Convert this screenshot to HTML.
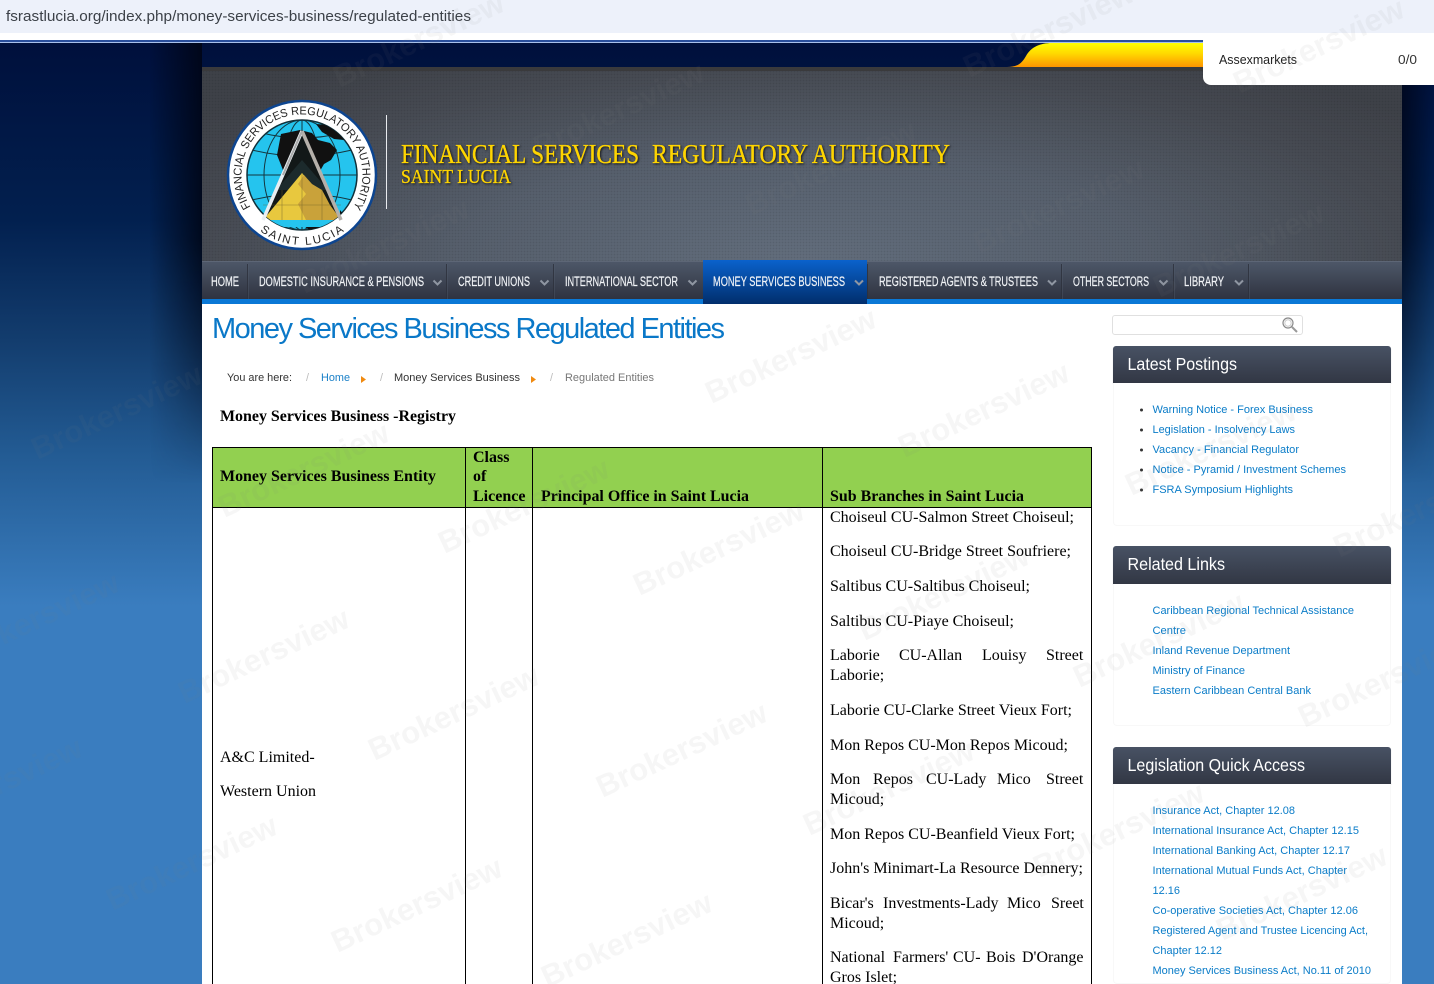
<!DOCTYPE html>
<html lang="en"><head><meta charset="utf-8"><title>Money Services Business Regulated Entities</title>
<style>
html,body{margin:0;padding:0;width:1434px;height:984px;overflow:hidden;background:#3a7dbf}
.a{position:absolute}
#bg{left:0;top:43px;width:1434px;height:941px;background:linear-gradient(180deg,#00103c 0,#02204f 177px,#133d6e 298px,#225a92 407px,#3a7dbf 563px,#3a7dbf 100%)}
#shL{left:150px;top:43px;width:52px;height:440px;background:linear-gradient(90deg,rgba(0,5,20,0),rgba(0,5,20,.85));-webkit-mask-image:linear-gradient(180deg,#000 45%,transparent 100%);mask-image:linear-gradient(180deg,#000 45%,transparent 100%)}
#shR{left:1402px;top:43px;width:32px;height:440px;background:linear-gradient(270deg,rgba(0,5,20,0),rgba(0,5,20,.7));-webkit-mask-image:linear-gradient(180deg,#000 45%,transparent 100%);mask-image:linear-gradient(180deg,#000 45%,transparent 100%)}
#top{left:0;top:0;width:1434px;height:33px;background:#edf1fa}
#wht{left:0;top:33px;width:1434px;height:7px;background:#fff}
#ln1{left:0;top:40px;width:1434px;height:2px;background:#2a4f9c}
#ln2{left:0;top:42px;width:1434px;height:1px;background:#a9c1ea}
#hdr{left:202px;top:67px;width:1200px;height:194px;background:radial-gradient(ellipse 760px 240px at 600px 194px,#626d7c 0,#565f6c 45%,#464a52 80%,#3e4148 100%)}
#dots{left:202px;top:67px;width:1200px;height:194px;background-image:radial-gradient(rgba(0,0,0,.09) .7px,transparent .9px);background-size:3px 3px}
#strip{left:202px;top:67px;width:1200px;height:4px;background:#3a3a3c}
#nav{left:202px;top:261px;width:1200px;height:38px;background:linear-gradient(180deg,#4d5768,#2f3340);border-top:1px solid #5d6676;box-sizing:border-box}
#navb{left:202px;top:299px;width:1200px;height:5px;background:#0a78d6}
#act{left:703px;top:260px;width:164px;height:44px;background:linear-gradient(180deg,#0a62cc,#012e6c)}
#main{left:202px;top:304px;width:1200px;height:680px;background:#fff}
#popup{left:1203px;top:33px;width:231px;height:52px;background:#fff;border-radius:8px 0 0 8px}
#srch{left:1112px;top:315px;width:191px;height:20px;box-sizing:border-box;border:1px solid #e0e0e0;border-radius:3px;background:#fff}
.ph{left:1113px;width:278px;background:linear-gradient(180deg,#485264,#323744);border-radius:3px 3px 0 0;box-shadow:0 1px 1px #ccc}
.pb{left:1113px;width:278px;box-sizing:border-box;border:1px solid #f8f8f8;border-top:0;border-radius:0 0 4px 4px;background:#fff}
#th{left:212px;top:447px;width:880px;height:61px;background:#92d050}
.bk{background:#000}
#main2{position:absolute;left:0;top:0}
svg text{white-space:pre}
.nv{font:13.5px "Liberation Sans Narrow","Liberation Sans",sans-serif;fill:#f2f4f7;stroke:#f2f4f7;stroke-width:.2px}
.s{font:11px "Liberation Sans",sans-serif;fill:#0a7cc8}
.t{font:16px "Liberation Serif",serif;fill:#000}
.b{font:bold 16px "Liberation Serif",serif;fill:#000}
.pt{font:18px "Liberation Sans",sans-serif;fill:#fff}
.bc{font:10.7px "Liberation Sans",sans-serif;fill:#333}
.ttl{font:27px "Liberation Serif",serif;fill:#ffd500;stroke:#ffd500;stroke-width:.35px;filter:drop-shadow(1.5px 1.5px 1px rgba(0,0,0,.75))}
.wm{font:bold 31px "Liberation Sans",sans-serif;fill:#808080;fill-opacity:.07}
</style></head><body>
<div class="a" id="bg"></div><div class="a" id="shL"></div><div class="a" id="shR"></div>
<div class="a" id="top"></div><div class="a" id="wht"></div><div class="a" id="ln1"></div><div class="a" id="ln2"></div>
<svg class="a" style="left:1000px;top:43px" width="210" height="26" viewBox="0 0 210 26"><defs><linearGradient id="yg" x1="0" y1="0" x2="0" y2="1"><stop offset="0" stop-color="#ffff00"/><stop offset=".45" stop-color="#ffd800"/><stop offset="1" stop-color="#ff9500"/></linearGradient></defs><path d="M7 24C18 24 22 20 26 13C31 4 40 0 52 0H210V24Z" fill="url(#yg)"/></svg>
<div class="a" id="hdr"></div><div class="a" id="dots"></div><div class="a" id="strip"></div>
<div class="a" id="nav"></div><div class="a" id="navb"></div><div class="a" id="act"></div>
<div class="a" id="main"></div>
<div class="a" id="popup"></div>
<div class="a" id="srch"></div>
<div class="a ph" style="top:346px;height:37px"></div><div class="a pb" style="top:383px;height:143px"></div>
<div class="a ph" style="top:546px;height:38px"></div><div class="a pb" style="top:584px;height:142px"></div>
<div class="a ph" style="top:747px;height:37px"></div><div class="a pb" style="top:784px;height:200px"></div>
<div class="a" id="th"></div>
<div class="a bk" style="left:212px;top:447px;width:880px;height:1px"></div>
<div class="a bk" style="left:212px;top:507px;width:880px;height:1px"></div>
<div class="a bk" style="left:212px;top:447px;width:1px;height:537px"></div>
<div class="a bk" style="left:465px;top:447px;width:1px;height:537px"></div>
<div class="a bk" style="left:532px;top:447px;width:1px;height:537px"></div>
<div class="a bk" style="left:822px;top:447px;width:1px;height:537px"></div>
<div class="a bk" style="left:1091px;top:447px;width:1px;height:537px"></div>
<div class="a" style="left:386px;top:115px;width:1px;height:94px;background:#e8eaee"></div>

<svg id="main2" width="1434" height="984" viewBox="0 0 1434 984">
<defs>
<clipPath id="gc"><circle cx="302" cy="175" r="55"/></clipPath>
<path id="arcT" d="M250.700 207A60.500 60.500 0 1 1 353.300 207"/>
<path id="arcB" d="M260 231A70 70 0 0 0 344 231"/>
</defs>
<!-- browser bar -->
<text x="6" y="21" textLength="465" lengthAdjust="spacingAndGlyphs" style="font:14.5px 'Liberation Sans',sans-serif;fill:#3c4148">fsrastlucia.org/index.php/money-services-business/regulated-entities</text>
<text x="1219" y="64" textLength="78" lengthAdjust="spacingAndGlyphs" style="font:12.500px 'Liberation Sans',sans-serif;fill:#222">Assexmarkets</text>
<text x="1398" y="64" textLength="19" lengthAdjust="spacingAndGlyphs" style="font:12.500px 'Liberation Sans',sans-serif;fill:#333">0/0</text>

<!-- logo -->
<circle cx="302" cy="175" r="74" fill="#fff" stroke="#0d4590" stroke-width="2.500"/>
<circle cx="302" cy="175" r="55" fill="#25c4ee" stroke="#10303a" stroke-width="1.500"/>
<g clip-path="url(#gc)">
<g fill="none" stroke="#14363f" stroke-width="1">
<ellipse cx="302" cy="175" rx="18" ry="55"/><ellipse cx="302" cy="175" rx="38" ry="55"/><path d="M302 120V230"/>
<path d="M247 175H357M252 150Q302 162 352 150M262 133Q302 143 342 133M252 200Q302 188 352 200M262 217Q302 207 342 217"/>
</g>
<path d="M281 134L300 130L312 133L318 140L330 143L337 150L331 160L324 164L316 178H286L281 165L277 155Z" fill="#111"/>
<path d="M316 124L328 125L340 132L344 140L334 139L322 132Z" fill="#111"/>
<path d="M304 226H336L326 232L312 232Z" fill="#111"/>
<path d="M340 210L346 218L340 222Z" fill="#111"/>
<path d="M302 131L341 220H263Z" fill="#121818"/>
<path d="M302 160L328 190H276Z" fill="#1c2a2c"/>
<path d="M302 173L341 220H263Z" fill="#e8c83e"/>
<path d="M304 175L312 184L322 190L330 205L341 220H306L298 204L306 194L298 184Z" fill="#c9a23a"/>
<path d="M258 220H346L340 227H264Z" fill="#25c4ee"/>
<g fill="none" stroke="#6d5f2a" stroke-width=".6" opacity=".7"><path d="M302 174V220M263 205H341M282 190V220M322 190V220"/></g>
</g>
<path d="M302 131L263 220" stroke="#e8eef2" stroke-width="3.500" fill="none"/>
<path d="M302 131L341 220" stroke="#b5b0aa" stroke-width="3.500" fill="none"/>
<path d="M302 131L283 175" stroke="#aaa" stroke-width="2" fill="none"/>
<text style="font:11.500px 'Liberation Sans',sans-serif;fill:#222"><textPath href="#arcT" textLength="258" lengthAdjust="spacingAndGlyphs">FINANCIAL SERVICES REGULATORY AUTHORITY</textPath></text>
<text style="font:11.500px 'Liberation Sans',sans-serif;fill:#222"><textPath href="#arcB" textLength="90" lengthAdjust="spacing">SAINT LUCIA</textPath></text>

<!-- title -->
<text class="ttl" x="401" y="163" textLength="238" lengthAdjust="spacingAndGlyphs">FINANCIAL SERVICES</text>
<text class="ttl" x="652" y="163" textLength="298" lengthAdjust="spacingAndGlyphs">REGULATORY AUTHORITY</text>
<text class="ttl" x="401" y="183" textLength="110" lengthAdjust="spacingAndGlyphs" style="font-size:20px">SAINT LUCIA</text>

<!-- nav -->
<g stroke="#2d313c" stroke-width="1" opacity=".8"><path d="M247.500 264V299M446.500 264V299M553.500 264V299M867.500 264V299M1061.500 264V299M1173.500 264V299M1248.500 264V299"/></g>
<g stroke="#566070" stroke-width="1" opacity=".35"><path d="M248.500 264V299M447.500 264V299M554.500 264V299M1062.500 264V299M1174.500 264V299M1249.500 264V299"/></g>
<text class="nv" x="211" y="286" textLength="28" lengthAdjust="spacingAndGlyphs">HOME</text>
<text class="nv" x="259" y="286" textLength="165" lengthAdjust="spacingAndGlyphs">DOMESTIC INSURANCE &amp; PENSIONS</text>
<text class="nv" x="458" y="286" textLength="72" lengthAdjust="spacingAndGlyphs">CREDIT UNIONS</text>
<text class="nv" x="565" y="286" textLength="113" lengthAdjust="spacingAndGlyphs">INTERNATIONAL SECTOR</text>
<text class="nv" x="713" y="286" textLength="132" lengthAdjust="spacingAndGlyphs">MONEY SERVICES BUSINESS</text>
<text class="nv" x="879" y="286" textLength="159" lengthAdjust="spacingAndGlyphs">REGISTERED AGENTS &amp; TRUSTEES</text>
<text class="nv" x="1073" y="286" textLength="76" lengthAdjust="spacingAndGlyphs">OTHER SECTORS</text>
<text class="nv" x="1184" y="286" textLength="40" lengthAdjust="spacingAndGlyphs">LIBRARY</text>
<g fill="none" stroke="#8f96a2" stroke-width="2"><path d="M433.500 280.500L437.500 284.500L441.500 280.500M540.500 280.500L544.500 284.500L548.500 280.500M688.500 280.500L692.500 284.500L696.500 280.500M855 280.500L859 284.500L863 280.500M1048 280.500L1052 284.500L1056 280.500M1159.500 280.500L1163.500 284.500L1167.500 280.500M1235 280.500L1239 284.500L1243 280.500"/></g>

<!-- heading + breadcrumb -->
<text x="212" y="338" textLength="513" lengthAdjust="spacing" style="font:29px 'Liberation Sans',sans-serif;fill:#0a78c8">Money Services Business Regulated Entities</text>
<text class="bc" x="227" y="381" textLength="65" lengthAdjust="spacingAndGlyphs">You are here:</text>
<text class="bc" x="306" y="381" style="fill:#bbb">/</text>
<text class="bc" x="321" y="381" textLength="29" lengthAdjust="spacingAndGlyphs" style="fill:#1a80c8">Home</text>
<path d="M361 376L366 379.500L361 383Z" fill="#f08a10"/>
<text class="bc" x="380" y="381" style="fill:#bbb">/</text>
<text class="bc" x="394" y="381" textLength="126" lengthAdjust="spacingAndGlyphs">Money Services Business</text>
<path d="M531 376L536 379.500L531 383Z" fill="#f08a10"/>
<text class="bc" x="550" y="381" style="fill:#bbb">/</text>
<text class="bc" x="565" y="381" textLength="89" lengthAdjust="spacingAndGlyphs" style="fill:#777">Regulated Entities</text>

<!-- search icon -->
<g fill="none"><circle cx="1288" cy="323" r="5" stroke="#8a8a8a" stroke-width="1.200"/><circle cx="1288" cy="323" r="3.200" stroke="#ccc" stroke-width="1"/><path d="M1292 327L1297 332" stroke="#999" stroke-width="2"/></g>

<!-- side panels -->
<text class="pt" x="1127.500" y="370" textLength="109.500" lengthAdjust="spacingAndGlyphs" style="font-size:17.500px">Latest Postings</text>
<text class="pt" x="1127.500" y="570" textLength="97.500" lengthAdjust="spacingAndGlyphs" style="font-size:17.500px">Related Links</text>
<text class="pt" x="1127.500" y="771" textLength="177.500" lengthAdjust="spacingAndGlyphs" style="font-size:17.500px">Legislation Quick Access</text>
<g fill="#333"><circle cx="1141.500" cy="410" r="1.500"/><circle cx="1141.500" cy="430" r="1.500"/><circle cx="1141.500" cy="450" r="1.500"/><circle cx="1141.500" cy="470" r="1.500"/><circle cx="1141.500" cy="490" r="1.500"/></g>
<text class="s" x="1152.500" y="413" textLength="160.500" lengthAdjust="spacingAndGlyphs">Warning Notice - Forex Business</text>
<text class="s" x="1152.500" y="433" textLength="142.500" lengthAdjust="spacingAndGlyphs">Legislation - Insolvency Laws</text>
<text class="s" x="1152.500" y="453" textLength="146.500" lengthAdjust="spacingAndGlyphs">Vacancy - Financial Regulator</text>
<text class="s" x="1152.500" y="473" textLength="193.500" lengthAdjust="spacingAndGlyphs">Notice - Pyramid / Investment Schemes</text>
<text class="s" x="1152.500" y="493" textLength="140.500" lengthAdjust="spacingAndGlyphs">FSRA Symposium Highlights</text>
<text class="s" x="1152.500" y="614" textLength="201.500" lengthAdjust="spacingAndGlyphs">Caribbean Regional Technical Assistance</text>
<text class="s" x="1152.500" y="634" textLength="33.500" lengthAdjust="spacingAndGlyphs">Centre</text>
<text class="s" x="1152.500" y="654" textLength="137.500" lengthAdjust="spacingAndGlyphs">Inland Revenue Department</text>
<text class="s" x="1152.500" y="674" textLength="92.500" lengthAdjust="spacingAndGlyphs">Ministry of Finance</text>
<text class="s" x="1152.500" y="694" textLength="158.500" lengthAdjust="spacingAndGlyphs">Eastern Caribbean Central Bank</text>
<text class="s" x="1152.500" y="814" textLength="142.500" lengthAdjust="spacingAndGlyphs">Insurance Act, Chapter 12.08</text>
<text class="s" x="1152.500" y="834" textLength="206.500" lengthAdjust="spacingAndGlyphs">International Insurance Act, Chapter 12.15</text>
<text class="s" x="1152.500" y="854" textLength="197.500" lengthAdjust="spacingAndGlyphs">International Banking Act, Chapter 12.17</text>
<text class="s" x="1152.500" y="874" textLength="194.500" lengthAdjust="spacingAndGlyphs">International Mutual Funds Act, Chapter</text>
<text class="s" x="1152.500" y="894" textLength="27.500" lengthAdjust="spacingAndGlyphs">12.16</text>
<text class="s" x="1152.500" y="914" textLength="205.500" lengthAdjust="spacingAndGlyphs">Co-operative Societies Act, Chapter 12.06</text>
<text class="s" x="1152.500" y="934" textLength="215.500" lengthAdjust="spacingAndGlyphs">Registered Agent and Trustee Licencing Act,</text>
<text class="s" x="1152.500" y="954" textLength="69.500" lengthAdjust="spacingAndGlyphs">Chapter 12.12</text>
<text class="s" x="1152.500" y="974" textLength="218.500" lengthAdjust="spacingAndGlyphs">Money Services Business Act, No.11 of 2010</text>

<!-- content -->
<text class="b" x="220" y="421" textLength="236" lengthAdjust="spacingAndGlyphs">Money Services Business -Registry</text>
<text class="b" x="220" y="481" textLength="216" lengthAdjust="spacingAndGlyphs">Money Services Business Entity</text>
<text class="b" x="473" y="462">Class</text><text class="b" x="473" y="481">of</text><text class="b" x="473" y="501">Licence</text>
<text class="b" x="541" y="501" textLength="208" lengthAdjust="spacingAndGlyphs">Principal Office in Saint Lucia</text>
<text class="b" x="830" y="501" textLength="194" lengthAdjust="spacingAndGlyphs">Sub Branches in Saint Lucia</text>
<text class="t" x="220" y="762">A&amp;C Limited-</text>
<text class="t" x="220" y="796">Western Union</text>
<text class="t" x="830" y="522" textLength="244" lengthAdjust="spacingAndGlyphs">Choiseul CU-Salmon Street Choiseul;</text>
<text class="t" x="830" y="556" textLength="241" lengthAdjust="spacingAndGlyphs">Choiseul CU-Bridge Street Soufriere;</text>
<text class="t" x="830" y="591" textLength="200" lengthAdjust="spacingAndGlyphs">Saltibus CU-Saltibus Choiseul;</text>
<text class="t" x="830" y="626" textLength="184" lengthAdjust="spacingAndGlyphs">Saltibus CU-Piaye Choiseul;</text>
<text class="t" y="660"><tspan x="830">Laborie</tspan><tspan x="899">CU-Allan</tspan><tspan x="982">Louisy</tspan><tspan x="1046">Street</tspan></text>
<text class="t" x="830" y="680">Laborie;</text>
<text class="t" x="830" y="715" textLength="242" lengthAdjust="spacingAndGlyphs">Laborie CU-Clarke Street Vieux Fort;</text>
<text class="t" x="830" y="750" textLength="238" lengthAdjust="spacingAndGlyphs">Mon Repos CU-Mon Repos Micoud;</text>
<text class="t" y="784"><tspan x="830">Mon</tspan><tspan x="873">Repos</tspan><tspan x="926">CU-Lady</tspan><tspan x="997">Mico</tspan><tspan x="1046">Street</tspan></text>
<text class="t" x="830" y="804">Micoud;</text>
<text class="t" x="830" y="839" textLength="245" lengthAdjust="spacingAndGlyphs">Mon Repos CU-Beanfield Vieux Fort;</text>
<text class="t" x="830" y="873" textLength="253" lengthAdjust="spacingAndGlyphs">John's Minimart-La Resource Dennery;</text>
<text class="t" y="908"><tspan x="830">Bicar's</tspan><tspan x="883">Investments-Lady</tspan><tspan x="1007">Mico</tspan><tspan x="1051">Sreet</tspan></text>
<text class="t" x="830" y="928">Micoud;</text>
<text class="t" y="962"><tspan x="830">National</tspan><tspan x="893">Farmers'</tspan><tspan x="953">CU-</tspan><tspan x="986">Bois</tspan><tspan x="1022">D'Orange</tspan></text>
<text class="t" x="830" y="982">Gros Islet;</text>

<!-- watermarks -->
<g class="wms">
<text class="wm" text-anchor="middle" transform="translate(795,365) rotate(-25)">Brokersview</text>
<text class="wm" text-anchor="middle" transform="translate(988,419) rotate(-25)">Brokersview</text>
<text class="wm" text-anchor="middle" transform="translate(723,557) rotate(-25)">Brokersview</text>
<text class="wm" text-anchor="middle" transform="translate(948,602) rotate(-25)">Brokersview</text>
<text class="wm" text-anchor="middle" transform="translate(268,665) rotate(-25)">Brokersview</text>
<text class="wm" text-anchor="middle" transform="translate(458,722) rotate(-25)">Brokersview</text>
<text class="wm" text-anchor="middle" transform="translate(686,759) rotate(-25)">Brokersview</text>
<text class="wm" text-anchor="middle" transform="translate(893,797) rotate(-25)">Brokersview</text>
<text class="wm" text-anchor="middle" transform="translate(196,872) rotate(-25)">Brokersview</text>
<text class="wm" text-anchor="middle" transform="translate(421,914) rotate(-25)">Brokersview</text>
<text class="wm" text-anchor="middle" transform="translate(631,949) rotate(-25)">Brokersview</text>
<text class="wm" text-anchor="middle" transform="translate(1,794) rotate(-25)">Brokersview</text>
<text class="wm" text-anchor="middle" transform="translate(38,629) rotate(-25)">Brokersview</text>
<text class="wm" text-anchor="middle" transform="translate(121,421) rotate(-25)">Brokersview</text>
<text class="wm" text-anchor="middle" transform="translate(308,479) rotate(-25)">Brokersview</text>
<text class="wm" text-anchor="middle" transform="translate(528,515) rotate(-25)">Brokersview</text>
<text class="wm" text-anchor="middle" transform="translate(1063,215) rotate(-25)">Brokersview</text>
<text class="wm" text-anchor="middle" transform="translate(835,177) rotate(-25)">Brokersview</text>
<text class="wm" text-anchor="middle" transform="translate(388,255) rotate(-25)">Brokersview</text>
<text class="wm" text-anchor="middle" transform="translate(1243,259) rotate(-25)">Brokersview</text>
<text class="wm" text-anchor="middle" transform="translate(623,119) rotate(-25)">Brokersview</text>
<text class="wm" text-anchor="middle" transform="translate(1323,55) rotate(-25)">Brokersview</text>
<text class="wm" text-anchor="middle" transform="translate(1053,39) rotate(-25)">Brokersview</text>
<text class="wm" text-anchor="middle" transform="translate(423,49) rotate(-25)">Brokersview</text>
<text class="wm" text-anchor="middle" transform="translate(1215,457) rotate(-25)">Brokersview</text>
<text class="wm" text-anchor="middle" transform="translate(1423,519) rotate(-25)">Brokersview</text>
<text class="wm" text-anchor="middle" transform="translate(1163,649) rotate(-25)">Brokersview</text>
<text class="wm" text-anchor="middle" transform="translate(1388,689) rotate(-25)">Brokersview</text>
<text class="wm" text-anchor="middle" transform="translate(1123,839) rotate(-25)">Brokersview</text>
<text class="wm" text-anchor="middle" transform="translate(1306,902) rotate(-25)">Brokersview</text>
</g>
</svg>
</body></html>
